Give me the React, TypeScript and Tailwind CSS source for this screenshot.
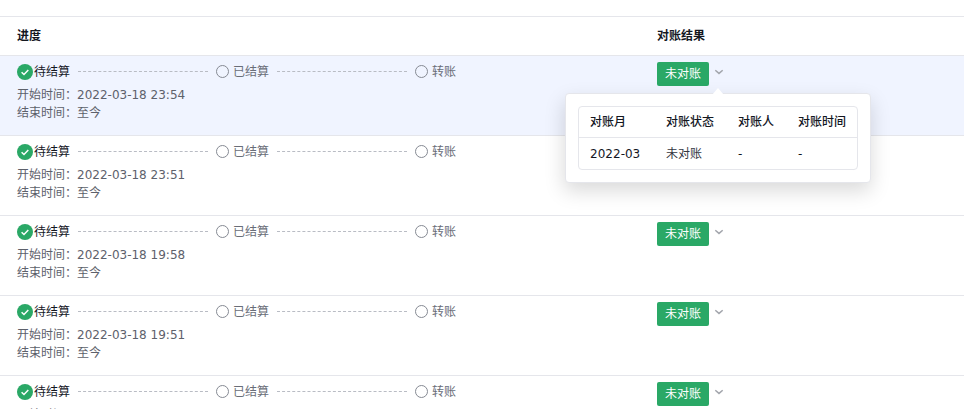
import React, { useState } from 'react';

interface Settlement {
  id: number;
  startedAt: string;
  endedAt: string;
  month: string;
  status: string;
}

const SETTLEMENTS: Settlement[] = [
  { id: 1, startedAt: '2022-03-18 23:54', endedAt: '至今', month: '2022-03', status: '未对账' },
  { id: 2, startedAt: '2022-03-18 23:51', endedAt: '至今', month: '2022-03', status: '未对账' },
  { id: 3, startedAt: '2022-03-18 19:58', endedAt: '至今', month: '2022-03', status: '未对账' },
  { id: 4, startedAt: '2022-03-18 19:51', endedAt: '至今', month: '2022-03', status: '未对账' },
  { id: 5, startedAt: '2022-03-18 19:46', endedAt: '至今', month: '2022-03', status: '未对账' },
];

const STEPS = ['待结算', '已结算', '转账'];

function DoneIcon() {
  return (
    <svg className="w-4 h-4" viewBox="0 0 16 16" fill="none" aria-hidden="true">
      <circle cx="8" cy="8" r="8" fill="#2aa866" />
      <path d="M4.6 8.2 7 10.5l4.3-4.4" stroke="#fff" strokeWidth="1.5" />
    </svg>
  );
}

function PendingIcon() {
  return (
    <svg className="w-4 h-4" viewBox="0 0 16 16" fill="none" aria-hidden="true">
      <circle cx="6.5" cy="7.5" r="6" stroke="#868a93" />
    </svg>
  );
}

function Progress({ current }: { current: number }) {
  return (
    <ol className="grid grid-cols-3">
      {STEPS.map((step, i) => (
        <li key={step} className="flex items-center h-5">
          <span className="w-[17px] shrink-0">{i <= current ? <DoneIcon /> : <PendingIcon />}</span>
          <span className={i <= current ? 'text-[#14171f]' : 'text-[#6a6e78]'}>{step}</span>
          {i < STEPS.length - 1 && (
            <span className="flex-1 mx-2 mb-px border-t border-dashed border-[#b9bcc4]" />
          )}
        </li>
      ))}
    </ol>
  );
}

function ResultPopover({ row }: { row: Settlement }) {
  return (
    <div className="absolute z-10 top-[27px] left-1/2 -translate-x-1/2 p-3 bg-white border border-[#e5e6eb] rounded-sm shadow-[0_8px_20px_rgba(0,0,0,0.15)]">
      <svg className="absolute -top-1.5 left-1/2 -translate-x-1/2 w-3 h-[7px]" viewBox="0 0 12 7" aria-hidden="true">
        <path d="M0 7 6 0l6 7z" fill="#fff" />
      </svg>
      <table className="border-separate border-spacing-0 border border-[#e5e6eb] rounded-sm whitespace-nowrap text-left text-[#14171f]">
        <thead>
          <tr className="h-[31px]">
            <th className="pl-[11px] pr-3 border-b border-[#e5e6eb] font-medium">对账月</th>
            <th className="px-3 border-b border-[#e5e6eb] font-medium">对账状态</th>
            <th className="px-3 border-b border-[#e5e6eb] font-medium">对账人</th>
            <th className="pl-3 pr-[11px] border-b border-[#e5e6eb] font-medium">对账时间</th>
          </tr>
        </thead>
        <tbody>
          <tr className="h-[31px]">
            <td className="min-w-[75px] pl-[11px] pr-3">{row.month}</td>
            <td className="px-3 text-[#33363f]">{row.status}</td>
            <td className="px-3">-</td>
            <td className="px-3">-</td>
          </tr>
        </tbody>
      </table>
    </div>
  );
}

export default function App() {
  const [openId, setOpenId] = useState<number | null>(1);

  return (
    <main className="h-screen overflow-hidden bg-white pt-4 text-xs leading-[18px] font-['DejaVu_Sans','Noto_Sans_CJK_SC',sans-serif]">
      <table className="w-full table-fixed border-separate border-spacing-0 border-t border-[#e5e6eb] text-left">
        <thead>
          <tr className="h-[39px] text-[#14171f]">
            <th className="w-[66.4%] pl-[17px] border-b border-[#e5e6eb] font-bold">进度</th>
            <th className="pl-[17px] border-b border-[#e5e6eb] font-bold">对账结果</th>
          </tr>
        </thead>
        <tbody>
          {SETTLEMENTS.map((row) => {
            const open = row.id === openId;
            return (
              <tr key={row.id} className={`h-20 align-top ${open ? 'bg-[#f0f4ff]' : 'bg-white'}`}>
                <td className="pt-1.5 pl-[17px] pr-[26px] border-b border-[#e5e6eb] text-[#5d616b]">
                  <Progress current={0} />
                  <p className="mt-1">开始时间：{row.startedAt}</p>
                  <p>结束时间：{row.endedAt}</p>
                </td>
                <td className="pt-1.5 pl-[17px] border-b border-[#e5e6eb]">
                  <div className="flex items-start gap-1">
                    <span className="px-2 leading-6 rounded-xs bg-[#2aa866] text-white">{row.status}</span>
                    <div className="relative mt-1 flex">
                      <button
                        type="button"
                        aria-label="对账详情"
                        aria-expanded={open}
                        onClick={() => setOpenId(open ? null : row.id)}
                        className="flex w-2.5 h-3"
                      >
                        <svg className="w-3 h-3 shrink-0" viewBox="0 0 12 12" fill="none" aria-hidden="true">
                          <path d="M2.3 4.2 6 7.4l3.7-3.2" stroke="#a3a6ad" strokeWidth="1.5" />
                        </svg>
                      </button>
                      {open && <ResultPopover row={row} />}
                    </div>
                  </div>
                </td>
              </tr>
            );
          })}
        </tbody>
      </table>
    </main>
  );
}
